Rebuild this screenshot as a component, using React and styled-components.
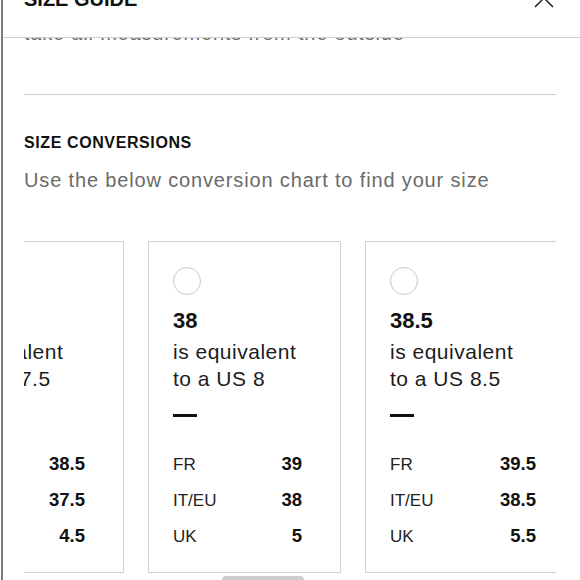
import React from 'react';
import styled, { createGlobalStyle } from 'styled-components';

const sizes = [
  { eu: '37.5', us: '7.5', fr: '38.5', it: '37.5', uk: '4.5', width: 209 },
  { eu: '38', us: '8', fr: '39', it: '38', uk: '5', width: 193 },
  { eu: '38.5', us: '8.5', fr: '39.5', it: '38.5', uk: '5.5', width: 210 },
];

export default function App() {
  return (
    <>
      <GlobalStyle />
      <Panel>
        <Header>
          <Title>SIZE GUIDE</Title>
          <CloseBtn aria-label="Close">
            <svg width="20" height="20" viewBox="0 0 20 20">
              <path d="M1 1 L19 19 M19 1 L1 19" stroke="#111" strokeWidth="1.4" fill="none" />
            </svg>
          </CloseBtn>
        </Header>
        <Body>
          <Intro>take all measurements from the outside</Intro>
          <Divider />
          <Heading>SIZE CONVERSIONS</Heading>
          <Subtitle>Use the below conversion chart to find your size</Subtitle>
          <Carousel>
            <Track>
              {sizes.map(s => (
                <Card key={s.eu} $width={s.width}>
                  <Radio />
                  <Size>{s.eu}</Size>
                  <Equiv>
                    is equivalent
                    <br />
                    to a US {s.us}
                  </Equiv>
                  <Dash />
                  <Table>
                    <Row>
                      <Label>FR</Label>
                      <Value>{s.fr}</Value>
                    </Row>
                    <Row>
                      <Label>IT/EU</Label>
                      <Value>{s.it}</Value>
                    </Row>
                    <Row>
                      <Label>UK</Label>
                      <Value>{s.uk}</Value>
                    </Row>
                  </Table>
                </Card>
              ))}
            </Track>
          </Carousel>
          <Scrollbar>
            <Thumb />
          </Scrollbar>
        </Body>
      </Panel>
    </>
  );
}

const GlobalStyle = createGlobalStyle`
  html, body {
    margin: 0;
    background: #fff;
    font-family: "Liberation Sans", Arial, sans-serif;
  }
`;

const Panel = styled.div`
  height: 580px;
  margin-left: 1px;
  border-left: 2px solid #7b7b7b;
  display: flex;
  flex-direction: column;
  overflow: hidden;
  background: #fff;
`;

const Header = styled.div`
  position: relative;
  z-index: 1;
  height: 37px;
  flex: 0 0 37px;
  display: flex;
  justify-content: space-between;
  align-items: flex-start;
  padding: 0 26px 0 21px;
  border-bottom: 1px solid #cfcfcf;
  background: #fff;
`;

const Title = styled.h2`
  margin: -11px 0 0;
  font-size: 20px;
  line-height: 20px;
  font-weight: 700;
  color: #111;
`;

const CloseBtn = styled.button`
  margin-top: -12px;
  padding: 0;
  border: 0;
  background: none;
  width: 20px;
  height: 20px;
  cursor: pointer;
`;

const Body = styled.div`
  flex: 1;
  overflow: hidden;
  padding: 0 24px 0 21px;
`;

const Intro = styled.p`
  margin: -19px 0 0;
  font-size: 20px;
  line-height: 28px;
  letter-spacing: 0.8px;
  color: #6d6d6d;
`;

const Divider = styled.hr`
  margin: 47px 0 0;
  height: 0;
  border: 0;
  border-top: 1px solid #cfcfcf;
`;

const Heading = styled.h3`
  margin: 38px 0 0;
  font-size: 16px;
  line-height: 20px;
  letter-spacing: 0.6px;
  font-weight: 700;
  color: #111;
`;

const Subtitle = styled.p`
  margin: 13px 0 0;
  font-size: 20px;
  line-height: 28px;
  letter-spacing: 0.85px;
  color: #6a6a6a;
`;

const Carousel = styled.div`
  margin-top: 47px;
  overflow: hidden;
`;

const Track = styled.div`
  display: flex;
  gap: 24px;
  margin-left: -109px;
`;

const Card = styled.div`
  flex: 0 0 ${p => p.$width}px;
  height: 332px;
  box-sizing: border-box;
  padding: 25px 38px 0 24px;
  border: 1px solid #d2d2d2;
  display: flex;
  flex-direction: column;
  color: #1c1c1c;
`;

const Radio = styled.span`
  width: 28px;
  height: 28px;
  box-sizing: border-box;
  border: 1px solid #c9c9c9;
  border-radius: 50%;
`;

const Size = styled.div`
  margin-top: 13px;
  font-size: 22px;
  line-height: 26px;
  font-weight: 700;
  color: #111;
`;

const Equiv = styled.div`
  margin-top: 4px;
  font-size: 21px;
  line-height: 27px;
  letter-spacing: 0.5px;
  white-space: nowrap;
`;

const Dash = styled.span`
  margin-top: 22px;
  width: 24px;
  height: 3px;
  background: #111;
`;

const Table = styled.div`
  margin-top: 29px;
`;

const Row = styled.div`
  display: flex;
  justify-content: space-between;
  align-items: baseline;
  height: 36px;
  line-height: 36px;
`;

const Label = styled.span`
  font-size: 17px;
  color: #222;
`;

const Value = styled.span`
  font-size: 18.5px;
  font-weight: 700;
  color: #111;
`;

const Scrollbar = styled.div`
  margin-top: 3px;
  height: 8px;
`;

const Thumb = styled.div`
  margin-left: 198px;
  width: 82px;
  height: 8px;
  border-radius: 4px;
  background: #cdcdcd;
`;
